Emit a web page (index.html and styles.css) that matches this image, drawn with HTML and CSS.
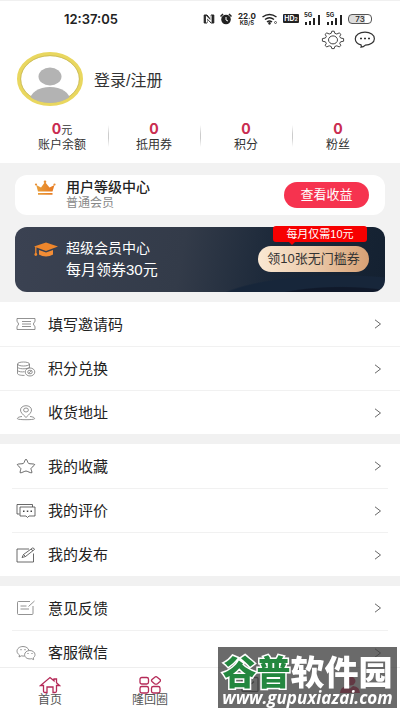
FILE: index.html
```html
<!DOCTYPE html>
<html lang="zh-CN">
<head>
<meta charset="utf-8">
<meta name="viewport" content="width=device-width, initial-scale=1">
<title>个人中心</title>
<link rel="stylesheet" href="styles.css">
</head>
<body>
<div class="app">
  <header class="status">
    <time class="clock">12:37:05</time>
    <div class="indicators">
      <svg width="12" height="12" viewBox="0 0 12 12"><path d="M3 10H1.200V2H4L8 7V2h2.800v8H8L4 5.500V10z" fill="#222" stroke="#222"/><path d="M3.500 9.500V4L8 8.500V2.500" fill="none" stroke="#fff" stroke-width="1.200"/></svg>
      <svg width="12" height="12" viewBox="0 0 12 12"><circle cx="6" cy="6.500" r="4.800" fill="#222"/><path d="M.5 3.500L3 1M11.500 3.500L9 1" stroke="#222" stroke-width="1.500"/><path d="M6 4v3l2 1" fill="none" stroke="#fff"/></svg>
      <span class="speed"><b>22.0</b><small>KB/S</small></span>
      <svg width="16" height="12" viewBox="0 0 16 12" fill="none" stroke="#222" stroke-width="1.500"><path d="M.5 4Q7.500-1 14.500 4M3 6.500Q7.500 3 12 6.500M5 9Q7.500 7 10 9"/><circle cx="7.500" cy="10.300" r=".6"/><circle cx="13.500" cy="9.500" r="1" stroke-width=".7"/></svg>
      <span class="hd">HD<small>2</small></span>
      <span class="signal"><small>5G</small><svg width="17" height="12" viewBox="0 0 17 12" fill="#222"><path d="M1 9h2v3H1zM5 8h2v4H5zM9 5h2v7H9zM14 2h2v10h-2z"/></svg></span>
      <span class="signal"><small>5G</small><svg width="17" height="12" viewBox="0 0 17 12" fill="#222"><path d="M1 9h2v3H1zM5 8h2v4H5zM9 5h2v7H9zM14 2h2v10h-2z"/></svg></span>
      <span class="battery">73</span>
    </div>
  </header>

  <main class="content">
    <section class="profile">
      <div class="tools">
        <button class="tool" type="button" aria-label="设置"><svg width="24" height="20" viewBox="0 0 24 20" fill="none" stroke="#444"><path d="M10.200 3.300 10.800 1.200h2.400l.6 2.100 2 .7 2.400-1.100 1.700 1.400-1.200 2.100.9 1.600 3 .6v2.600l-3 .6-.9 1.600 1.200 2.100-1.700 1.400-2.400-1.100-2 .7-.6 2.100h-2.400l-.6-2.100-2-.7-2.400 1.100-1.700-1.400 1.200-2.100-.9-1.600-3-.6V8.600l3-.6.9-1.600-1.200-2.100 1.700-1.400L8.200 4z" stroke-linejoin="round"/><ellipse cx="12" cy="9.900" rx="4.500" ry="4"/></svg></button>
        <button class="tool" type="button" aria-label="消息"><svg width="22" height="18" viewBox="0 0 22 18" fill="none" stroke="#333" stroke-width="1.200"><path d="M7 13.800C3.500 13 1.300 10.500 1.300 7.700 1.300 4 5.600 1.200 11 1.200s9.400 2.800 9.400 6.500-4.200 6.500-9 6.500c-1 1-3 2-4.400 2 .5-.8.400-1.600 0-2.400z"/><path d="M6 7.500h2M10 7.500h2M14 7.500h2" stroke-width="1.700"/></svg></button>
      </div>
      <a class="account" href="#login">
        <svg class="avatar" width="68" height="56" viewBox="0 0 68 56"><defs><clipPath id="face"><ellipse cx="34" cy="28" rx="30" ry="24"/></clipPath></defs><ellipse cx="34" cy="28" rx="31" ry="25" fill="#fff" stroke="#e9d75f" stroke-width="4"/><ellipse cx="34" cy="28" rx="29.300" ry="23.300" fill="none" stroke="#b8a94f" stroke-width=".6"/><g fill="#b3b3b3" clip-path="url(#face)"><ellipse cx="34" cy="25.500" rx="11.500" ry="9"/><ellipse cx="34" cy="50" rx="20.500" ry="14"/></g></svg>
        <span>登录/注册</span>
      </a>
      <ul class="stats">
        <li><span class="num"><b>0</b>元</span><span>账户余额</span></li>
        <li><span class="num"><b>0</b></span><span>抵用券</span></li>
        <li><span class="num"><b>0</b></span><span>积分</span></li>
        <li><span class="num"><b>0</b></span><span>粉丝</span></li>
      </ul>
    </section>

    <section class="cards">
      <article class="card level">
        <svg class="mark" width="24" height="16" viewBox="0 0 24 16"><defs><linearGradient id="gold" x2="1"><stop stop-color="#e8a03d"/><stop offset="1" stop-color="#e87820"/></linearGradient></defs><path d="M4 11.500 2.200 5 7 7.500 11 2l4.500 5.500L20.500 5 18.500 11.500zM4 13h14.500v1.800H4z" fill="url(#gold)"/><g fill="#e89035"><circle cx="11" cy="1.800" r="1.300"/><circle cx="2" cy="4.500" r="1.100"/><circle cx="20.500" cy="4.500" r="1.100"/></g></svg>
        <div class="copy"><h2>用户等级中心</h2><p>普通会员</p></div>
        <button class="pill earn" type="button">查看收益</button>
      </article>
      <article class="card super">
        <svg class="mark" width="24" height="16" viewBox="0 0 24 16"><path d="M0 4.500 12 .5l12 4L12 9z" fill="#ee862b"/><path d="M5 8l7 2.500L19 8v4.500c-4 2.500-10 2.500-14 0z" fill="#f28d36"/><path d="M1.800 5v8" stroke="#ee862b" stroke-width="1.300"/><circle cx="1.800" cy="12.500" r="1.400" fill="#ee862b"/></svg>
        <div class="copy"><h2>超级会员中心</h2><p>每月领券30元</p></div>
        <div class="offer"><span class="tag">每月仅需10元</span><button class="pill coupon" type="button">领10张无门槛券</button></div>
      </article>
    </section>

    <nav class="menus" aria-label="服务">
      <ul class="menu wide">
        <li><a href="#invite"><svg class="icon" viewBox="0 0 20 16"><path d="M1 2.500h18v3.200a2.500 2.500 0 0 0 0 4.600v3.200H1v-3.200a2.500 2.500 0 0 0 0-4.600zM6 5.500h9M6 8h9M6 10.500h9"/></svg><span>填写邀请码</span><svg class="arrow" viewBox="0 0 8 10"><path d="M1 .8 6.500 5 1 9.200"/></svg></a></li>
        <li><a href="#points"><svg class="icon" viewBox="0 0 20 16"><ellipse cx="7.500" cy="3" rx="6" ry="2"/><path d="M1.500 3v9.500c0 1.200 3 2 7 1.900M13.500 3v4M1.500 6.200c1 1.800 8 2.200 11.500.6M1.500 9.500c1 1.300 4.500 1.700 7 1.200"/><ellipse cx="14" cy="11" rx="4.800" ry="4"/><ellipse cx="14" cy="11" rx="2.300" ry="1.800"/><path d="M12.500 12.300l3-2.600"/></svg><span>积分兑换</span><svg class="arrow" viewBox="0 0 8 10"><path d="M1 .8 6.500 5 1 9.200"/></svg></a></li>
        <li><a href="#address"><svg class="icon" viewBox="0 0 20 16"><path d="M10 12.500C6.500 9 4.500 7.500 4.500 5c0-2.500 2.500-4.300 5.500-4.300S15.500 2.500 15.500 5c0 2.500-2 4-5.500 7.500z"/><ellipse cx="10" cy="5" rx="2.400" ry="2"/><path d="M6 11.500c-3 .3-5 1.200-4.500 2.300.5 1.200 16.500 1.200 17 0 .5-1.100-1.500-2-4.500-2.300"/></svg><span>收货地址</span><svg class="arrow" viewBox="0 0 8 10"><path d="M1 .8 6.500 5 1 9.200"/></svg></a></li>
      </ul>
      <ul class="menu">
        <li><a href="#favorites"><svg class="icon dark" viewBox="0 0 20 16"><path d="M10 1c.8 0 1.800 4 2.700 4.500s5.800.2 6 1-3.400 3-3.700 3.900 1.500 3.900.8 4.400S11 13 10 13s-5.200 2.300-5.800 1.800.9-3.500.6-4.400S1 7.300 1.300 6.500s5-.5 6-1S9.200 1 10 1z"/></svg><span>我的收藏</span><svg class="arrow" viewBox="0 0 8 10"><path d="M1 .8 6.500 5 1 9.200"/></svg></a></li>
        <li><a href="#reviews"><svg class="icon dark" viewBox="0 0 20 16"><path d="M3.500 11H1V1.500h15.500V4M4 4h15v9h-6l-1.500 1.500L10 13H4z"/><path d="M7 8.300h1.500M10.800 8.300h1.500M14.500 8.300H16" stroke-width="1.500"/></svg><span>我的评价</span><svg class="arrow" viewBox="0 0 8 10"><path d="M1 .8 6.500 5 1 9.200"/></svg></a></li>
        <li><a href="#posts"><svg class="icon dark" viewBox="0 0 20 16"><path d="M13 2H1v13h16.500V6.500M6 10.500 7.500 7.500 16.500 1q1.800 0 2 1.500L9.500 9.500zM7.500 7.500l2 2M15 2.200l2 1.500"/></svg><span>我的发布</span><svg class="arrow" viewBox="0 0 8 10"><path d="M1 .8 6.500 5 1 9.200"/></svg></a></li>
      </ul>
      <ul class="menu">
        <li><a href="#feedback"><svg class="icon" viewBox="0 0 20 16"><path d="M14 1.500H2.500q-1 0-1 1v11q0 1 1 1H16q1 0 1-1V6M4.500 6h6M4.500 9h8.500M12.500 6.500 18.500 1"/></svg><span>意见反馈</span><svg class="arrow" viewBox="0 0 8 10"><path d="M1 .8 6.500 5 1 9.200"/></svg></a></li>
        <li><a href="#service"><svg class="icon" viewBox="0 0 20 16"><path d="M8.500 11c-1 .2-2 .1-3-.2L3 12l.5-2C2 9 1 7.700 1 6.200 1 3.500 3.700 1.500 7 1.500c3 0 5.500 1.700 6 4"/><path d="M13.800 5.500c3 0 5.200 1.900 5.200 4.200 0 1.300-.7 2.400-1.700 3.200l.3 1.700-2-.9c-3.500.8-7-.9-7-4 0-2.300 2.300-4.200 5.200-4.200z"/><path d="M4.500 4.700h1M8.500 4.700h1M11.500 8.500h1M15.500 8.500h1" stroke-width="1.200"/></svg><span>客服微信</span><svg class="arrow" viewBox="0 0 8 10"><path d="M1 .8 6.500 5 1 9.200"/></svg></a></li>
      </ul>
    </nav>
  </main>

  <nav class="tabs" aria-label="主导航">
    <a href="#home"><svg width="22" height="18" viewBox="0 0 22 18"><path d="M4.500 9.500H1.500L11 1.500l4 3.300V3h2.500v3.800L20.500 9.500h-3V15q0 1.500-1.500 1.500h-2V11H8v5.500H6Q4.500 16.500 4.500 15z"/></svg><span>首页</span></a>
    <a href="#circle"><svg width="22" height="18" viewBox="0 0 22 18"><rect x="1" y="1.500" width="8.500" height="6.500" rx="1.800"/><rect x="1" y="10.500" width="8.500" height="6.500" rx="1.800"/><rect x="12.500" y="10.500" width="8.500" height="6.500" rx="1.800"/><path d="M17 .7q.7 0 1.500.7l2.500 2.100q1 1 0 2L18.500 7.700q-1.500 1-3 0L13 5.500q-1-1 0-2l2.500-2.100q.8-.7 1.500-.7z"/></svg><span>隆回圈</span></a>
    <a href="#orders" aria-label="订单"><svg class="order" width="20" height="18" viewBox="0 0 20 18"><rect x="2" y="1.500" width="16" height="14" rx="1"/><path d="M6 5.500q4 5 8 0"/></svg></a>
    <a href="#me" aria-label="我的"><svg class="me" width="22" height="18" viewBox="0 0 22 18"><ellipse cx="11" cy="5" rx="5.500" ry="4.500"/><path d="M1 17q0-6 7-7l3 2.500L14 10q7 1 7 7z"/></svg></a>
  </nav>

  <aside class="watermark">
    <strong><em>谷普</em>软件园</strong>
    <span>www.gupuxiazai.com</span>
  </aside>
</div>
</body>
</html>
```
FILE: styles.css
```css
* { box-sizing: border-box; }
body {
  margin: 0;
  background: #fff;
  color: #333;
  font-family: "Liberation Sans", "Noto Sans CJK SC", sans-serif;
  font-size: 12px;
}
ul { list-style: none; margin: 0; padding: 0; }
h2, p { margin: 0; font-weight: 400; }
a { color: inherit; text-decoration: none; }
button { margin: 0; padding: 0; border: 0; background: none; font: inherit; color: inherit; }
svg { display: block; flex: none; }

.app {
  height: 100vh;
  display: flex;
  flex-direction: column;
  border-top: 1px solid #f0f0f0;
}

.status {
  flex: none;
  display: flex;
  justify-content: space-between;
  align-items: center;
  height: 28px;
  padding: 7px 28px 0 64px;
}
.clock { font: 600 13px/16px Inter, sans-serif; color: #222; }
.indicators { display: flex; align-items: center; gap: 5px; color: #222; }
.speed { display: flex; flex-direction: column; align-items: center; width: 20px; font-family: Inter, sans-serif; }
.speed b { font-size: 8px; line-height: 8px; }
.speed small { font-size: 6px; line-height: 6px; font-weight: 600; }
.hd {
  width: 16px;
  height: 9px;
  border-radius: 1px;
  background: #222;
  color: #fff;
  font: 700 7px/9px Inter, sans-serif;
  text-align: center;
}
.hd small { font-size: 5px; }
.signal { position: relative; }
.signal small { position: absolute; top: -2px; left: 0; font: 700 6px/8px Inter, sans-serif; }
.battery {
  width: 24px;
  height: 10px;
  border: 1px solid #555;
  border-radius: 4px;
  background: linear-gradient(90deg, #ddd 73%, #fff 73%);
  font: 500 8px/8px Inter, sans-serif;
  text-align: center;
}

.content { flex: 1; min-height: 0; overflow: hidden; }
.tools { display: flex; justify-content: flex-end; align-items: center; gap: 9px; height: 22px; padding-right: 24px; }
.account {
  display: flex;
  align-items: center;
  gap: 10px;
  padding-left: 16px;
  font-size: 16px;
}
.stats { display: flex; padding: 14px 16px 8px; }
.stats li {
  flex: 1;
  display: flex;
  flex-direction: column;
  align-items: center;
  line-height: 16px;
  height: 34px;
}
.stats li + li { background: linear-gradient(#fff, #ccc 40%, #ccc 60%, #fff) no-repeat left 4px / 1px 22px; }
.num b { color: #c92c50; font: 700 14px/16px Inter, sans-serif; }
.num { font-size: 11px; height: 16px; }

.cards {
  display: flex;
  flex-direction: column;
  gap: 12px;
  padding: 12px 15px 10px;
  background: #f2f2f2;
}
.card { display: flex; align-items: center; gap: 8px; padding: 0 16px 0 19px; border-radius: 12px; }
.copy { flex: 1; padding-bottom: 2px; }
.copy h2 { font-size: 14px; line-height: 18px; font-weight: 500; }
.level { height: 40px; background: #fff; color: #222; }
.level .mark { align-self: flex-start; margin-top: 5px; }
.level p { color: #888; line-height: 15px; }
.super {
  height: 65px;
  color: #fff;
  background:
    radial-gradient(ellipse at 88% 125%, #10192a 0 18%, #17263a 19% 28%, transparent 29%),
    linear-gradient(100deg, #3b4252, #333b49 45%, #1b2839 70%, #142131);
}
.super .mark { align-self: flex-start; margin-top: 15px; }
.super .copy { display: flex; flex-direction: column; gap: 4px; }
.super h2 { font-weight: 400; }
.super p { font-size: 15px; line-height: 18px; }
.pill { border-radius: 13px; height: 26px; padding-bottom: 3px; }
.earn { width: 85px; background: #f6334f; color: #fff; font-size: 13px; }
.offer { position: relative; align-self: flex-end; padding-bottom: 20px; }
.coupon {
  width: 111px;
  color: #333;
  font-size: 13px;
  background: linear-gradient(90deg, #fae8d3, #eccaaa 50%, #d7a074);
}
.tag {
  position: absolute;
  right: 2px;
  bottom: 50px;
  width: 94px;
  border-radius: 3px;
  background: #f70000;
  font-size: 11px;
  line-height: 16px;
  text-align: center;
}
.tag::after {
  content: "";
  position: absolute;
  left: 16px;
  top: 100%;
  border: 3px solid transparent;
  border-top-color: #f70000;
  border-bottom: 0;
}

.menus { display: flex; flex-direction: column; gap: 10px; background: #f1f1f1; }
.menu { background: #fff; padding: 0 12px; }
.menu li + li { border-top: 1px solid #f1f1f1; }
.menu li { height: 44px; }
.menu a { display: flex; align-items: center; gap: 12px; height: 100%; padding: 0 6px 0 4px; font-size: 15px; color: #222; }
.menu.wide { padding: 0; }
.menu.wide a { padding: 0 18px 0 16px; }
.menu span { flex: 1; padding-bottom: 2px; }
.icon { width: 20px; height: 16px; fill: none; stroke: #777; stroke-width: 0.8; stroke-linejoin: round; }
.icon.dark { stroke: #444; }
.arrow { width: 8px; height: 10px; fill: none; stroke: #666; }

.tabs {
  flex: none;
  display: flex;
  height: 44px;
  border-top: 1px solid #eee;
  background: #fff;
}
.tabs a { flex: 1; display: flex; flex-direction: column; align-items: center; padding-top: 8px; font-size: 12px; line-height: 13px; color: #555; }
.tabs svg { fill: none; stroke: #b52a58; stroke-width: 1.3; }
.tabs .order { stroke: #555; }
.tabs .me { fill: #d81e50; stroke: none; }

.watermark {
  position: fixed;
  right: 3px;
  bottom: 3px;
  width: 179px;
  height: 61px;
  display: flex;
  flex-direction: column;
  align-items: center;
  padding-top: 5px;
  background: rgba(64, 64, 64, 0.78);
  color: #fff;
  white-space: nowrap;
}
.watermark strong { font: oblique 6deg 900 34px/37px "Noto Sans CJK SC", sans-serif; }
.watermark em { font-style: inherit; color: #23873f; -webkit-text-stroke: 3px #fff; paint-order: stroke fill; }
.watermark span { font: italic 700 17px/17px "Open Sans", sans-serif; }
```
